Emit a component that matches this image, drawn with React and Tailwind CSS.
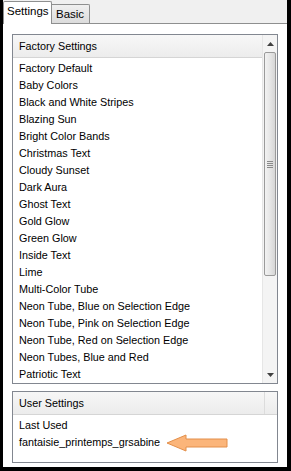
const factoryItems = [
  "Factory Default",
  "Baby Colors",
  "Black and White Stripes",
  "Blazing Sun",
  "Bright Color Bands",
  "Christmas Text",
  "Cloudy Sunset",
  "Dark Aura",
  "Ghost Text",
  "Gold Glow",
  "Green Glow",
  "Inside Text",
  "Lime",
  "Multi-Color Tube",
  "Neon Tube, Blue on Selection Edge",
  "Neon Tube, Pink on Selection Edge",
  "Neon Tube, Red on Selection Edge",
  "Neon Tubes, Blue and Red",
  "Patriotic Text",
];

const Scrollbar = () => (
  <div className="w-[15px] shrink-0 flex flex-col bg-[#f4f4f4] border-l border-[#e6e6e6]">
    <div className="h-[17px] flex items-center justify-center">
      <svg width="7" height="4" viewBox="0 0 7 4">
        <path d="M0 4 L3.5 0 L7 4 Z" fill="#404040" />
      </svg>
    </div>
    <div className="mx-[1px] h-[224px] rounded-[2px] border border-[#9a9a9a] bg-gradient-to-r from-[#f2f2f2] via-[#e6e6e6] to-[#d6d6d6] flex items-center justify-center">
      <div className="flex flex-col gap-[1px]">
        <div className="w-[6px] h-px bg-[#8a8a8a]" />
        <div className="w-[6px] h-px bg-[#8a8a8a]" />
        <div className="w-[6px] h-px bg-[#8a8a8a]" />
        <div className="w-[6px] h-px bg-[#8a8a8a]" />
      </div>
    </div>
    <div className="flex-1" />
    <div className="h-[17px] flex items-center justify-center">
      <svg width="7" height="4" viewBox="0 0 7 4">
        <path d="M0 0 L3.5 4 L7 0 Z" fill="#404040" />
      </svg>
    </div>
  </div>
);

const Header = ({ children, divider }) => (
  <div className="h-[23px] flex items-stretch bg-gradient-to-b from-[#f7f7f7] to-[#ececec] border-b border-[#d5d5d5]">
    <div className="flex-1 pl-[6px] flex items-center">{children}</div>
    {divider && <div className="w-[13px] border-l border-[#dcdcdc]" />}
  </div>
);

export default function App() {
  return (
    <div
      className="w-[291px] h-[471px] bg-black pl-[3px] pr-[4px] pb-[4px] text-[10.8px] text-black leading-none"
      style={{ fontFamily: "'Liberation Sans', Arial, sans-serif" }}
    >
      <div className="h-full flex flex-col bg-white">
        <div className="h-[24px] flex items-end bg-[#f0f0f0] border-b border-[#8e8f8f]">
          <div className="h-[23px] w-[49px] -mb-px bg-white border border-b-0 border-[#8e8f8f] rounded-t-[2px] flex items-center pl-[3px] pb-[2px] z-10 text-[11.5px]">
            Settings
          </div>
          <div className="h-[19px] w-[38px] border border-b-0 border-l-0 border-[#8e8f8f] rounded-tr-[2px] bg-gradient-to-b from-[#f0f0f0] to-[#dcdcdc] flex items-center pl-[4px] pt-[1px] text-[11.5px]">
            Basic
          </div>
        </div>

        <div className="flex-1 flex flex-col px-[9px] pt-[10px]">
          <div className="h-[350px] border border-[#828790] flex">
            <div className="flex-1 flex flex-col">
              <Header>Factory Settings</Header>
              <div className="pt-[2px] pl-[6px]">
                {factoryItems.map((item) => (
                  <div key={item} className="h-[17px] flex items-center whitespace-nowrap">
                    {item}
                  </div>
                ))}
              </div>
            </div>
            <Scrollbar />
          </div>

          <div className="mt-[7px] h-[72px] border border-[#828790] flex flex-col">
            <Header divider>User Settings</Header>
            <div className="pt-[2px] pl-[6px]">
              <div className="h-[17px] flex items-center">Last Used</div>
              <div className="h-[17px] flex items-center gap-[6px]">
                <span>fantaisie_printemps_grsabine</span>
                <svg width="62" height="18" viewBox="0 0 62 18">
                  <path
                    d="M1 9 L20 1 L20 5 L61 5 L61 13 L20 13 L20 17 Z"
                    fill="#fbb57a"
                    stroke="#e38f4a"
                    strokeWidth="1"
                  />
                </svg>
              </div>
            </div>
          </div>
        </div>
      </div>
    </div>
  );
}
